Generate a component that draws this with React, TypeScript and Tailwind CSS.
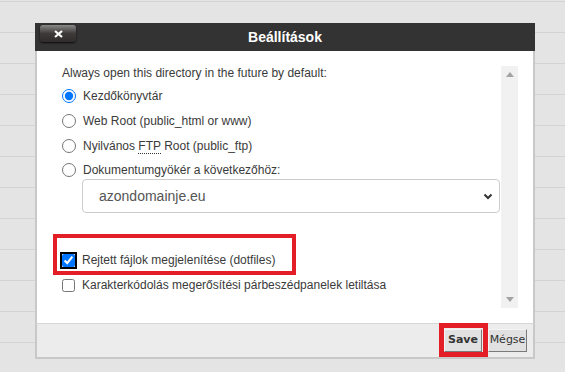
import React from 'react';

const radios = [
  { label: 'Kezdőkönyvtár', checked: true },
  { label: 'Web Root (public_html or www)' },
  { label: 'ftp' },
  { label: 'Dokumentumgyökér a következőhöz:' },
];

function ScrollArrow({ up }: { up?: boolean }) {
  return (
    <svg width="8" height="5" viewBox="0 0 8 5" className="block">
      <path d={up ? 'M0 5 L4 0 L8 5 Z' : 'M0 0 L4 5 L8 0 Z'} fill="#a3a3a3" />
    </svg>
  );
}

export default function App() {
  return (
    <div className="relative h-[372px] w-[565px] overflow-hidden bg-[#e4e4e4] font-['Liberation_Sans',Arial,sans-serif]">
      {/* background table rows */}
      <div className="pt-[1px]">
        {Array.from({ length: 13 }).map((_, i) => (
          <div key={i} className="h-[31px] border-t border-[#d3d3d3]" />
        ))}
      </div>

      {/* dialog */}
      <div className="absolute left-[35px] top-[23px] w-[500px]">
        <div className="relative flex h-[28px] items-center justify-center bg-[#333333]">
          <button className="absolute left-[5px] top-[2px] flex h-[17px] w-[36px] items-center justify-center rounded-[3px] bg-gradient-to-b from-[#8a8a8a] via-[#3e3a39] to-[#2f2c2b] shadow-[0_1px_2px_rgba(0,0,0,0.8)]">
            <svg width="9" height="8" viewBox="0 0 9 8">
              <path d="M1 1 L8 7 M8 1 L1 7" stroke="#fff" strokeWidth="2.2" />
            </svg>
          </button>
          <span className="text-[14px] font-bold text-white">Beállítások</span>
        </div>

        <div className="flex h-[272px] border-x-2 border-[#c8c8c8] bg-white pl-[25px] pr-[15px] text-[#3a3a3a]">
          <div className="flex w-[439px] flex-col pt-[13px]">
            <div className="h-[18px] text-[12px] leading-[18px]">
              Always open this directory in the future by default:
            </div>
            <div className="mt-[4px] flex flex-col gap-[5px]">
              {radios.map((r, i) => (
                <label key={i} className={`flex items-center gap-[7px] text-[12px] ${i === 3 ? 'h-[18px]' : 'h-[20px]'}`}>
                  <input type="radio" name="dir" defaultChecked={r.checked} className="m-0 h-[14px] w-[14px]" />
                  {r.label === 'ftp' ? (
                    <span>
                      Nyilvános <abbr className="border-b border-dotted border-[#333] no-underline">FTP</abbr> Root (public_ftp)
                    </span>
                  ) : (
                    <span>{r.label}</span>
                  )}
                </label>
              ))}
            </div>
            <div className="ml-[20px] mr-[1px] flex h-[34px] items-center justify-between rounded-[4px] border border-[#cccccc] pl-[16px] pr-[6px] text-[14px] text-[#555]">
              <span>azondomainje.eu</span>
              <svg width="10" height="7" viewBox="0 0 10 7">
                <path d="M1.5 1.5 L5 5 L8.5 1.5" stroke="#333" strokeWidth="2" fill="none" />
              </svg>
            </div>
            <div className="mt-[37px] flex flex-col gap-[5px] text-[12px]">
              <label className="flex h-[20px] items-center gap-[7px]">
                <input type="checkbox" defaultChecked className="m-0 h-[13px] w-[13px] rounded-[2px] outline outline-2 outline-black" />
                <span>Rejtett fájlok megjelenítése (dotfiles)</span>
              </label>
              <label className="flex h-[20px] items-center gap-[7px]">
                <input type="checkbox" className="m-0 h-[13px] w-[13px]" />
                <span>Karakterkódolás megerősítési párbeszédpanelek letiltása</span>
              </label>
            </div>
          </div>
          <div className="my-[15px] flex w-[17px] flex-col items-center justify-between bg-[#f1f1f1] py-[6px]">
            <ScrollArrow up />
            <ScrollArrow />
          </div>
        </div>

        <div className="relative flex h-[36px] items-center justify-end gap-[6px] border-x-2 border-b-2 border-t border-[#c8c8c8] border-t-[#d6d6d6] bg-[#ececec] pr-[6px] font-['DejaVu_Sans',Verdana,sans-serif] text-[11px] text-[#333]">
          <button className="h-[23px] w-[38px] border border-[#f4f4f4] border-b-[#7a7a7a] border-r-[#7a7a7a] bg-[#e1e1e1] font-bold">
            Save
          </button>
          <button className="h-[23px] w-[39px] border border-[#f4f4f4] border-b-[#7a7a7a] border-r-[#7a7a7a] bg-[#e1e1e1]">
            Mégse
          </button>
          <div className="absolute right-[45px] top-[-1px] h-[34px] w-[49px] border-[5px] border-[#e41e26]" />
        </div>

        {/* annotation around dotfiles option */}
        <div className="absolute left-[18px] top-[211px] h-[41px] w-[243px] border-4 border-[#e41e26]" />
      </div>
    </div>
  );
}
